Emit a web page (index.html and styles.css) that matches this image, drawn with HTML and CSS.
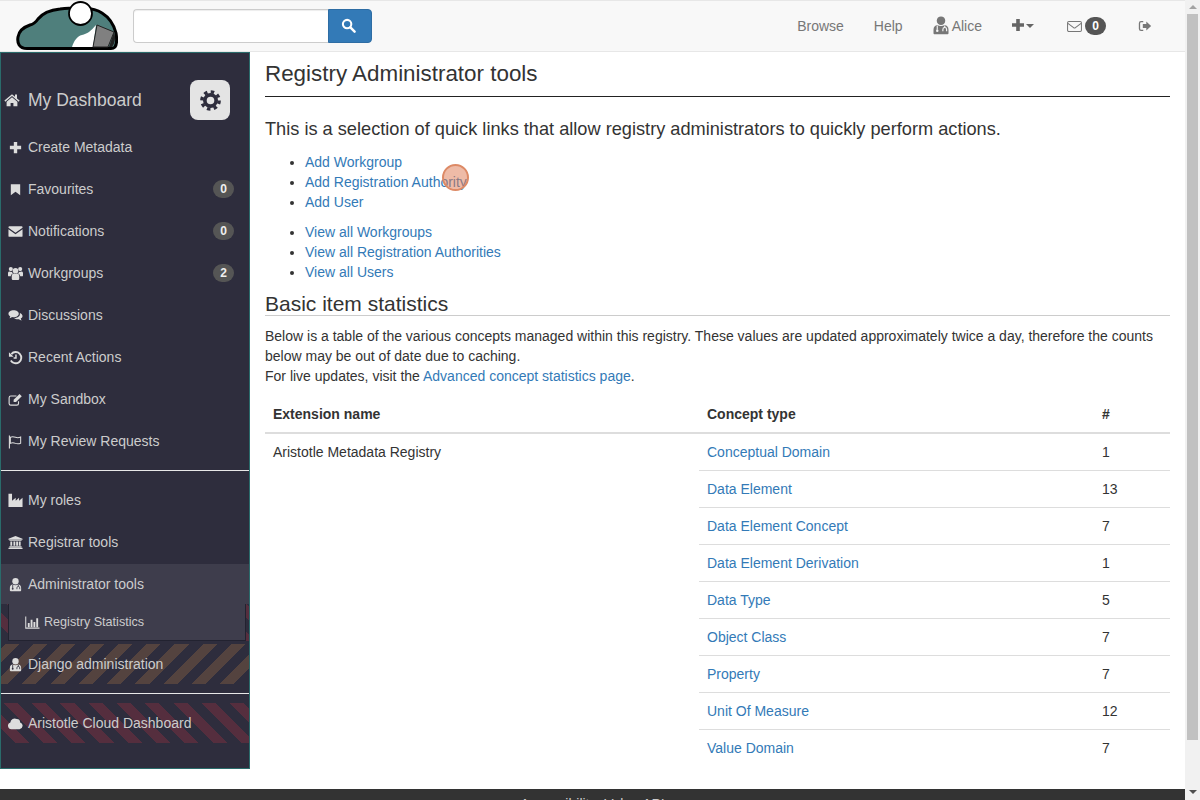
FILE: index.html
```html
<!DOCTYPE html>
<html lang="en">
<head>
  <meta charset="UTF-8">
  <title>Registry Administrator tools</title>
  <link rel="stylesheet" href="styles.css">
</head>
<body>
  <!-- shared icons -->
  <svg class="icon-defs" width="0" height="0">
    <defs>
      <symbol id="i-search" viewBox="0 0 16 16"><circle cx="6.5" cy="6.5" r="4.5" fill="none" stroke="currentColor" stroke-width="2.2"/><path d="M10 10l4.5 4.5" stroke="currentColor" stroke-width="2.6" stroke-linecap="round"/></symbol>
      <symbol id="i-home" viewBox="0 0 16 16"><path d="M8 2.2L0.4 8.6l.9 1.1L8 4.1l6.7 5.6.9-1.1-2.6-2.2V2.6h-2v2.1z"/><path d="M8 5.2l-5.4 4.5v4.6h4v-3.4h2.8v3.4h4V9.7z"/></symbol>
      <symbol id="i-cog" viewBox="0 0 16 16"><circle cx="8" cy="8" r="4.3" fill="none" stroke="currentColor" stroke-width="2.8"/><circle cx="8" cy="8" r="6.6" fill="none" stroke="currentColor" stroke-width="2.6" stroke-dasharray="2.6 2.58"/></symbol>
      <symbol id="i-plus" viewBox="0 0 16 16"><path d="M6.2 2h3.6v4.2H14v3.6H9.800V14H6.200V9.800H2V6.200h4.200z"/></symbol>
      <symbol id="i-bookmark" viewBox="0 0 16 16"><path d="M3 2.500h10v11.500L8 10.500l-5 3.500z"/></symbol>
      <symbol id="i-envelope" viewBox="0 0 16 16"><path d="M.5 3.500A1 1 0 0 1 1.500 2.500h13a1 1 0 0 1 1 1v.6L8 9.200.5 4.100z"/><path d="M.5 5.700L8 10.800l7.500-5.100v7a1 1 0 0 1-1 1h-13a1 1 0 0 1-1-1z"/></symbol>
      <symbol id="i-users" viewBox="0 0 16 16"><circle cx="8" cy="5" r="3"/><circle cx="3" cy="3.300" r="2.200"/><circle cx="13" cy="3.300" r="2.200"/><path d="M4 10.500c0-1.500 1-2.500 2.300-2.500 1 .7 2.400.7 3.400 0 1.300 0 2.300 1 2.300 2.500v3c0 1-.7 1.500-1.500 1.500h-5C4.700 15 4 14.500 4 13.500z"/><path d="M0 7.500C0 6.500.7 5.800 1.600 5.800c.9.6 1.900.6 2.700.2.100.8.400 1.400 1 1.900C4 8.400 3.100 9.300 3 11H1c-.6 0-1-.4-1-1z"/><path d="M16 7.500c0-1-.7-1.700-1.600-1.700-.9.6-1.900.6-2.700.2-.1.8-.4 1.400-1 1.900 1.300.5 2.200 1.400 2.300 3.100h2c.6 0 1-.4 1-1z"/></symbol>
      <symbol id="i-comments" viewBox="0 0 16 16"><path d="M6 2.500c3 0 5.500 1.600 5.500 3.700S9 9.900 6 9.900c-.6 0-1.100 0-1.600-.2-.8.6-1.800 1-3 1.200.5-.6.900-1.200 1-1.900C1.200 8.300.5 7.300.5 6.200.5 4.100 3 2.500 6 2.500z"/><path d="M12.600 5.300c1.700.6 2.900 1.900 2.900 3.300 0 1.100-.7 2-1.900 2.700.1.800.5 1.300 1 1.900-1.200-.2-2.200-.6-3-1.200-2 .3-4-.2-5.100-1.400 3.800.2 6.900-2 6.100-5.300z"/></symbol>
      <symbol id="i-history" viewBox="0 0 16 16"><path d="M3.600 4.300A6 6 0 1 1 3 11.200" fill="none" stroke="currentColor" stroke-width="2"/><path d="M1 2.300v5h5z"/><path d="M8.500 4.800v3.700H6" fill="none" stroke="currentColor" stroke-width="1.600"/></symbol>
      <symbol id="i-edit" viewBox="0 0 16 16"><path d="M11.200 9.800v2.400a1.800 1.800 0 0 1-1.800 1.800H3a1.800 1.800 0 0 1-1.800-1.800V6A1.800 1.800 0 0 1 3 4.200h6" fill="none" stroke="currentColor" stroke-width="1.200"/><path d="M6 8.200L12.300 2l2.400 2.400-6.200 6.300H6z"/></symbol>
      <symbol id="i-flag" viewBox="0 0 16 16"><path d="M1.500 1.500v14" stroke="currentColor" stroke-width="1.200"/><path d="M2.500 3.500c2-1 3.500-.8 5.500 0s3.500.6 5.500-.2v6.500c-2 .8-3.500 1-5.500.2s-3.500-1-5.500 0z" fill="none" stroke="currentColor" stroke-width="1.100"/></symbol>
      <symbol id="i-industry" viewBox="0 0 16 16"><path d="M.5 .8h3.800v7.400l3.900-3.200v3.200l3.600-3.200v3.200l3.700-3.200V15H.5z"/></symbol>
      <symbol id="i-bank" viewBox="0 0 16 16"><path d="M8 1l7.500 3v1H.5V4z"/><path d="M1.500 5.500h13v1h-13zM2.500 7h2v4.500h-2zM5.800 7h2v4.500h-2zM8.700 7h2v4.500h-2zM11.500 7h2v4.500h-2zM1.500 12h13v1.200h-13zM.5 13.700h15V15H.5z"/></symbol>
      <symbol id="i-usermd" viewBox="0 0 16 16"><circle cx="8" cy="4.500" r="3.400"/><path d="M2 14.500v-2.800C2 9.500 3.300 8.200 5 8c.8.500 1.900.8 3 .8S10.200 8.500 11 8c1.700.2 3 1.500 3 3.700v2.800c0 .5-.5.8-1 .8H3c-.5 0-1-.3-1-.8z"/><path d="M5 8.300v3.500M11 8.300v1.700M9.500 13v-1.500c0-.8.6-1.500 1.500-1.500s1.500.7 1.500 1.500V13" fill="none" stroke="var(--cut)" stroke-width=".9"/><circle cx="5" cy="12.500" r="1" fill="var(--cut)"/></symbol>
      <symbol id="i-chart" viewBox="0 0 16 16"><path d="M.8 1.500v12.500h14.700" fill="none" stroke="currentColor" stroke-width="1.100"/><path d="M3 8.500h2V13H3zM6 5h2v8H6zM9 7.500h2V13H9zM12 3.500h2V13h-2z"/></symbol>
      <symbol id="i-cloud" viewBox="0 0 16 16"><path d="M3.800 14a3.700 3.700 0 0 1-1.300-7.200A4.500 4.500 0 0 1 9.400 3.300 3.700 3.700 0 0 1 13 6.800 3.700 3.700 0 0 1 12.300 14z"/></symbol>
      <symbol id="i-envelope-o" viewBox="0 0 16 16"><rect x=".6" y="2.600" width="14.800" height="10.800" rx="1.400" fill="none" stroke="currentColor" stroke-width="1.100"/><path d="M1 4.600l6 4.600c.6.500 1.400.5 2 0l6-4.600" fill="none" stroke="currentColor" stroke-width="1.100"/></symbol>
      <symbol id="i-signout" viewBox="0 0 16 16"><path d="M6 3H3.500A1.800 1.800 0 0 0 1.700 4.800v6.400A1.800 1.800 0 0 0 3.500 13H6" fill="none" stroke="currentColor" stroke-width="1.500"/><path d="M9.500 2.800L15 8l-5.500 5.200V10.200H5.500V5.800h4z"/></symbol>
    </defs>
  </svg>

  <div class="page">
    <nav class="navbar">
      <a class="logo" href="#">
        <svg width="102" height="50" viewBox="16 1 102 50">
          <path d="M27 48.500C19 48.500 17 43 18 37C19 31 24 27 30 25C34 24 36 22 38 19C42 14 50 10 60 9C66 8 72 8 78 9C86 8 96 9 102 13C110 18 114 25 116 33C117 39 117 44 115 47C114 48 113 48.500 111 48.500Z" fill="#4f7f7c" stroke="#000" stroke-width="3"/>
          <path d="M72 47C74 41 77 36 82 35C87 34 91 31 96 25L93 47z" fill="#fff"/>
          <path d="M97 25L114 32L108 47H93z" fill="#808080" stroke="#222" stroke-width="1"/>
          <path d="M114 32C116 37 115 43 112 47H109z" fill="#222"/>
          <circle cx="80.500" cy="13.500" r="11.500" fill="#fff" stroke="#000" stroke-width="1.800"/>
        </svg>
      </a>
      <form class="search">
        <input class="search-input" type="text">
        <button class="search-btn" type="button"><svg class="icon"><use href="#i-search"/></svg></button>
      </form>
      <ul class="nav-links">
        <li class="nav-browse">Browse</li>
        <li class="nav-help">Help</li>
        <li class="nav-user"><svg class="icon" style="--cut:#f8f8f8"><use href="#i-usermd"/></svg>Alice</li>
        <li class="nav-add"><svg class="icon"><use href="#i-plus"/></svg><span class="caret"></span></li>
        <li class="nav-mail"><svg class="icon"><use href="#i-envelope-o"/></svg><span class="nav-badge">0</span></li>
        <li class="nav-out"><svg class="icon"><use href="#i-signout"/></svg></li>
      </ul>
    </nav>

    <div class="main">
      <aside class="sidebar">
        <div class="dash-head">
          <svg class="icon dash-icon"><use href="#i-home"/></svg>
          <span class="dash-title">My Dashboard</span>
          <span class="dash-gear"><svg class="icon"><use href="#i-cog"/></svg></span>
        </div>
        <ul class="side-menu">
          <li class="side-item"><svg class="icon"><use href="#i-plus"/></svg>Create Metadata</li>
          <li class="side-item"><svg class="icon"><use href="#i-bookmark"/></svg>Favourites<span class="side-badge">0</span></li>
          <li class="side-item"><svg class="icon"><use href="#i-envelope"/></svg>Notifications<span class="side-badge">0</span></li>
          <li class="side-item"><svg class="icon"><use href="#i-users"/></svg>Workgroups<span class="side-badge">2</span></li>
          <li class="side-item"><svg class="icon"><use href="#i-comments"/></svg>Discussions</li>
          <li class="side-item"><svg class="icon"><use href="#i-history"/></svg>Recent Actions</li>
          <li class="side-item"><svg class="icon"><use href="#i-edit"/></svg>My Sandbox</li>
          <li class="side-item"><svg class="icon"><use href="#i-flag"/></svg>My Review Requests</li>
        </ul>
        <hr class="side-rule">
        <ul class="side-menu">
          <li class="side-item"><svg class="icon"><use href="#i-industry"/></svg>My roles</li>
          <li class="side-item"><svg class="icon"><use href="#i-bank"/></svg>Registrar tools</li>
          <li class="side-item active"><svg class="icon"><use href="#i-usermd"/></svg>Administrator tools</li>
          <li class="side-sub">
            <div class="side-sub-inner"><svg class="icon"><use href="#i-chart"/></svg>Registry Statistics</div>
          </li>
          <li class="side-item stripe-brown"><svg class="icon"><use href="#i-usermd"/></svg>Django administration</li>
        </ul>
        <hr class="side-rule">
        <ul class="side-menu">
          <li class="side-item stripe-red"><svg class="icon"><use href="#i-cloud"/></svg>Aristotle Cloud Dashboard</li>
        </ul>
      </aside>

      <section class="content">
        <h1>Registry Administrator tools</h1>
        <p class="lead">This is a selection of quick links that allow registry administrators to quickly perform actions.</p>
        <ul class="links">
          <li><a href="#">Add Workgroup</a></li>
          <li><a href="#">Add Registration Authority</a></li>
          <li><a href="#">Add User</a></li>
        </ul>
        <ul class="links">
          <li><a href="#">View all Workgroups</a></li>
          <li><a href="#">View all Registration Authorities</a></li>
          <li><a href="#">View all Users</a></li>
        </ul>
        <h2>Basic item statistics</h2>
        <p class="intro">Below is a table of the various concepts managed within this registry. These values are updated approximately twice a day, therefore the counts below may be out of date due to caching.<br>For live updates, visit the <a href="#">Advanced concept statistics page</a>.</p>
        <table class="stats">
          <colgroup><col class="col-ext"><col class="col-type"><col class="col-num"></colgroup>
          <thead>
            <tr><th>Extension name</th><th>Concept type</th><th>#</th></tr>
          </thead>
          <tbody>
            <tr><td rowspan="9">Aristotle Metadata Registry</td><td><a href="#">Conceptual Domain</a></td><td>1</td></tr>
            <tr><td><a href="#">Data Element</a></td><td>13</td></tr>
            <tr><td><a href="#">Data Element Concept</a></td><td>7</td></tr>
            <tr><td><a href="#">Data Element Derivation</a></td><td>1</td></tr>
            <tr><td><a href="#">Data Type</a></td><td>5</td></tr>
            <tr><td><a href="#">Object Class</a></td><td>7</td></tr>
            <tr><td><a href="#">Property</a></td><td>7</td></tr>
            <tr><td><a href="#">Unit Of Measure</a></td><td>12</td></tr>
            <tr><td><a href="#">Value Domain</a></td><td>7</td></tr>
          </tbody>
        </table>
      </section>
    </div>

    <footer class="footer">Accessibility &nbsp;Value API</footer>
    <span class="click-mark"></span>
  </div>

  <div class="scrollbar">
    <span class="arrow-up"></span>
    <span class="thumb"></span>
    <span class="arrow-down"></span>
  </div>
</body>
</html>
```

FILE: styles.css
```css
html, body { margin:0; height:100%; overflow:hidden; }
body { display:flex; font-family:"Liberation Sans",Arial,sans-serif; font-size:14px; line-height:20px; color:#333; background:#fff; }
a { color:#337ab7; text-decoration:none; }
ul { list-style:none; margin:0; padding:0; }
.icon-defs { position:absolute; }
.icon { width:16px; height:16px; fill:currentColor; flex:none; }

.page { position:relative; flex:1; min-width:0; height:800px; overflow:hidden; }

/* top bar */
.navbar { display:flex; align-items:center; height:50px; background:#f8f8f8; border:1px solid #e7e7e7; border-width:1px 0; }
.logo { display:block; width:102px; height:50px; margin:0 15px 0 16px; }
.search { display:flex; }
.search-input { width:195px; height:34px; box-sizing:border-box; border:1px solid #ccc; border-right:0; border-radius:4px 0 0 4px; background:#fff; box-shadow:inset 0 1px 1px rgba(0,0,0,.075); }
.search-btn { display:flex; align-items:center; justify-content:center; width:44px; height:34px; padding:0; border:1px solid #2e6da4; border-radius:0 4px 4px 0; background:#337ab7; color:#fff; }
.search-btn .icon { width:15px; height:15px; margin:-1px 3px 0 0; }
.nav-links { display:flex; align-items:center; margin-left:auto; color:#777; }
.nav-links li { display:flex; align-items:center; }
.nav-browse { margin-right:30px; }
.nav-help { margin-right:30px; }
.nav-user { margin-right:30px; }
.nav-user .icon { width:20px; height:20px; margin:-2px 1px 0 -2px; }
.nav-add { margin-right:33px; color:#666; }
.nav-add .icon { width:16px; height:16px; margin:-2px -1px 0 -2px; }
.caret { width:0; height:0; margin-left:1px; border:4.500px solid transparent; border-top-color:#666; border-bottom:0; }
.nav-mail { margin-right:32px; }
.nav-mail .icon { width:15px; height:15px; margin-right:3px; }
.nav-badge { min-width:7px; padding:0 7px; border-radius:10px; background:#555; color:#fff; font-size:12px; font-weight:bold; line-height:18px; text-align:center; }
.nav-out { margin-right:33px; }
.nav-out .icon { width:14px; height:14px; }

.main { display:flex; align-items:flex-start; }

/* sidebar */
.sidebar { width:248px; height:715px; flex:none; background:#2e2d3d; border:1px solid #2a6b6b; color:#ccc; }
.dash-head { display:flex; align-items:center; height:74px; padding:20px 19px 0 3px; box-sizing:border-box; }
.dash-icon { margin-right:8px; width:16px; height:16px; color:#ddd; }
.dash-title { font-size:17.500px; flex:1; }
.dash-gear { display:flex; align-items:center; justify-content:center; width:40px; height:40px; border-radius:8px; background:#e4e4e4; color:#2e2d3d; }
.dash-gear .icon { width:21px; height:21px; }
.side-item { display:flex; align-items:center; height:40px; margin-bottom:2px; padding:0 15px 0 7px; --cut:#2e2d3d; }
.side-item .icon { width:15px; height:15px; margin-right:5px; color:#ddd; }
.side-badge { margin-left:auto; padding:0 7px; border-radius:10px; background:#555; color:#eee; font-size:12px; font-weight:bold; line-height:18px; }
.side-item.active { margin-bottom:0; background:#3e3d4c; --cut:#3e3d4c; }
.side-sub { height:37px; margin-bottom:3px; padding:0 3px 0 7px; background:repeating-linear-gradient(45deg,#2e2d3d 0,#2e2d3d 10px,#552e3e 10px,#552e3e 20px); }
.side-sub-inner { display:flex; align-items:center; height:36px; padding-left:16px; background:#3e3d4c; border:1px solid #222230; border-top:0; font-size:12.600px; }
.side-sub-inner .icon { width:15px; height:15px; margin-right:4px; color:#ddd; }
.stripe-brown { background:repeating-linear-gradient(135deg,#2e2d3d 0,#2e2d3d 3px,#54433f 3px,#54433f 13px,#2e2d3d 13px,#2e2d3d 20px); }
.stripe-red { background:repeating-linear-gradient(45deg,#2e2d3d 0,#2e2d3d 10px,#552e3e 10px,#552e3e 20px); }
.side-rule { height:1px; margin:9px 0; border:0; background:#e8e8e8; }

/* main content */
.content { flex:1; min-width:0; padding:0 15px; }
h1 { margin:10px 0 0; padding-bottom:10px; border-bottom:1px solid #222; font-size:22.400px; font-weight:normal; line-height:24px; }
.lead { margin:19px 0 10px; font-size:18.200px; line-height:26px; }
.links { margin-bottom:10px; padding-left:40px; list-style:disc; }
h2 { margin:11px 0 10px; border-bottom:1px solid #ccc; font-size:21px; font-weight:normal; line-height:22px; }
.intro { margin:0 0 10px; }
.stats { width:100%; border-collapse:collapse; table-layout:fixed; }
.col-ext { width:434px; }
.col-type { width:395px; }
.stats th { padding:8px; border-bottom:2px solid #ddd; text-align:left; }
.stats td { padding:8px; border-top:1px solid #ddd; vertical-align:top; }
.stats tbody tr:first-child td { border-top:0; }

.footer { height:60px; margin-top:20px; padding-top:5px; background:#333; color:#ccc; text-align:center; }

/* click highlight from the recording */
.click-mark { position:absolute; left:442px; top:164px; width:23px; height:23px; border:2px solid #dd8a66; border-radius:50%; background:rgba(222,120,80,.5); }

/* browser scrollbar */
.scrollbar { display:flex; flex-direction:column; align-items:center; width:15px; height:800px; flex:none; background:#f1f1f1; }
.arrow-up { width:0; height:0; margin:5px 0 5px; border:4px solid transparent; border-bottom-color:#a3a3a3; border-top:0; }
.thumb { width:11px; height:726px; background:#c1c1c1; }
.arrow-down { width:0; height:0; margin-top:50px; border:4px solid transparent; border-top-color:#505050; border-bottom:0; }
```
